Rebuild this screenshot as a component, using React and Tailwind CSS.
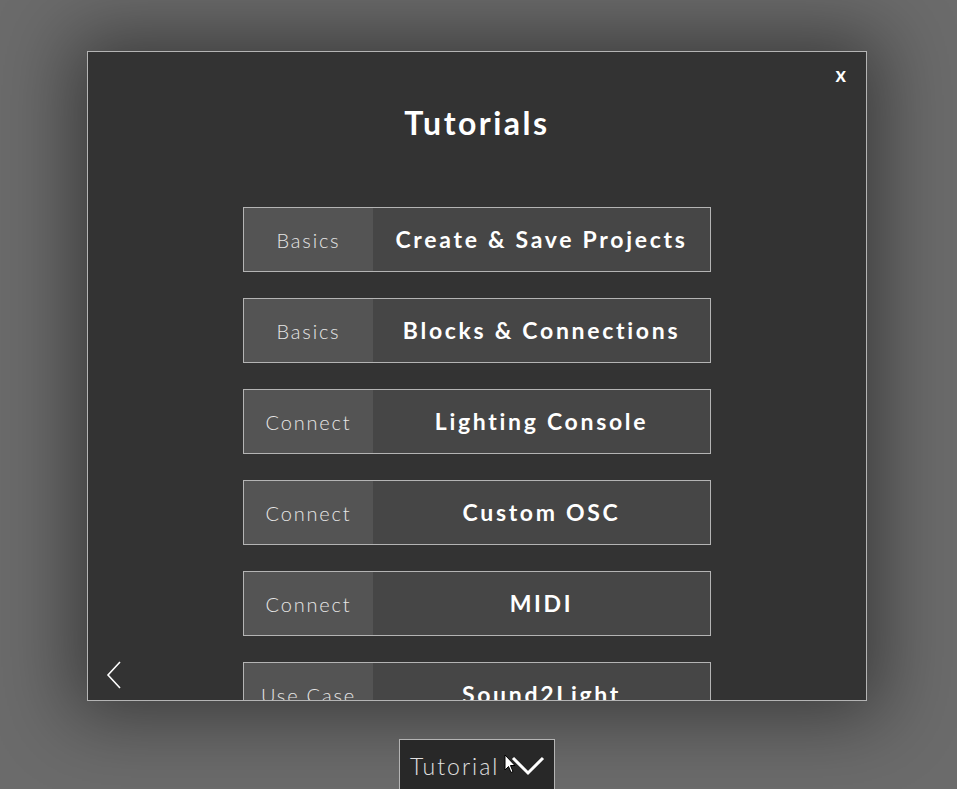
import React from 'react';

const tutorials = [
  { tag: 'Basics', title: 'Create & Save Projects' },
  { tag: 'Basics', title: 'Blocks & Connections' },
  { tag: 'Connect', title: 'Lighting Console' },
  { tag: 'Connect', title: 'Custom OSC' },
  { tag: 'Connect', title: 'MIDI' },
  { tag: 'Use Case', title: 'Sound2Light' },
];

const font = { fontFamily: 'Lato, "Open Sans", sans-serif' };

const App = () => {
  return (
    <div className="h-[789px] w-full overflow-hidden bg-[#6b6b6b] flex flex-col items-start" style={font}>
      {/* Tutorials modal */}
      <div className="shrink-0 ml-[87px] mt-[51px] relative w-[780px] h-[650px] bg-[#333333] border border-[#b4b4b4] overflow-hidden shadow-[0_0_70px_15px_rgba(0,0,0,0.45)]">
        <button className="absolute right-[20px] top-[12px] text-white text-[20px] font-bold leading-none">x</button>

        <div className="flex flex-col items-center pt-[53px]">
          <h2 className="text-white text-[32px] font-bold tracking-[2.5px] leading-[36px]">Tutorials</h2>
          <div className="mt-[66px] flex flex-col gap-[26px]">
            {tutorials.map((t, i) => (
              <div key={i} className="shrink-0 w-[468px] h-[65px] border border-[#b4b4b4] grid grid-cols-[129px_1fr]">
                <div className="bg-[#545454] flex items-center justify-center text-[#e6e6e6] text-[20px] font-light tracking-[1.8px]">
                  {t.tag}
                </div>
                <div className="bg-[#464646] flex items-center justify-center text-white text-[23px] font-bold tracking-[2.7px]">
                  {t.title}
                </div>
              </div>
            ))}
          </div>
        </div>

        {/* back arrow */}
        <svg className="absolute left-[18px] top-[609px]" width="16" height="28" viewBox="0 0 16 28" fill="none">
          <path d="M14 1 L2 14 L14 27" stroke="white" strokeWidth="1.6" />
        </svg>
      </div>

      {/* bottom tab */}
      <div className="shrink-0 ml-[399px] mt-[38px] w-[156px] h-[60px] bg-[#282828] border border-[#b4b4b4] flex items-start pt-[12px] pl-[10px] relative">
        <span className="text-[#e0e0e0] text-[23px] font-light tracking-[2px] leading-[28px]">Tutorial</span>
        <svg className="shrink-0 ml-[12px] mt-[3px]" width="34" height="22" viewBox="0 0 34 22" fill="none">
          <path d="M2 3 L17 18 L32 3" stroke="white" strokeWidth="3" />
        </svg>
        <svg className="absolute left-[104px] top-[14px]" width="12" height="20" viewBox="0 0 12 20">
          <path d="M1 1 L1 16 L4.5 12.5 L7 18.5 L9 17.5 L6.5 11.5 L11 11.5 Z" fill="white" stroke="black" strokeWidth="1" />
        </svg>
      </div>
    </div>
  );
};

export default App;
